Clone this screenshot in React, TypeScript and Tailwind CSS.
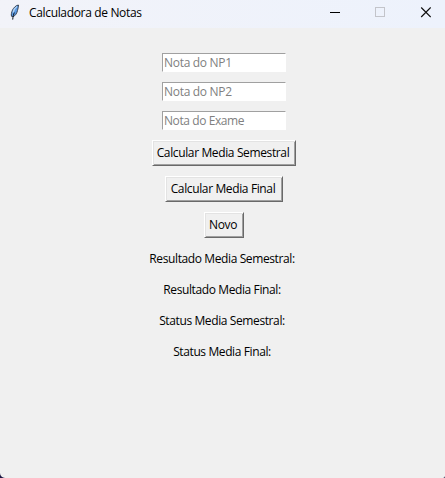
const fields = [
  { text: "Nota do NP1", tracking: "tracking-[-0.3px]" },
  { text: "Nota do NP2", tracking: "tracking-[-0.3px]" },
  { text: "Nota do Exame", tracking: "tracking-[-0.42px]" },
];

const buttons = [
  { label: "Calcular Media Semestral", size: "w-36" },
  { label: "Calcular Media Final", size: "w-[118px]" },
  { label: "Novo", size: "w-10" },
];

const results = [
  "Resultado Media Semestral:",
  "Resultado Media Final:",
  "Status Media Semestral:",
  "Status Media Final:",
];

function Feather() {
  return (
    <svg width="10" height="17" viewBox="0 0 10 17" fill="none">
      <path d="M8.4 1 C6 1.4 3.6 3.6 2.4 6.3 C1.5 8.5 1 10.6 1.5 12.3 L3 12.8 C5.4 11.6 6.9 9.3 7.5 6.5 C7.9 4.6 8.7 2.6 8.4 1Z" fill="#5b9be6" stroke="#2b3644" strokeWidth=".9" />
      <path d="M6.9 2.4 C5 3.6 3.6 6 3 8.6" stroke="#b8d4ef" strokeWidth="1.2" />
      <path d="M4.3 8.5 C3.6 10.3 3 12.5 2.7 15.6" stroke="#111822" strokeWidth="1" />
    </svg>
  );
}

function TitleBar() {
  return (
    <header className="flex h-7 items-center justify-between bg-gradient-to-r from-[#f2f3f9] to-[#edf2fc]">
      <div className="flex items-center gap-[9px] pl-2.5 pb-1">
        <Feather />
        <span className="pt-0.5 text-black tracking-[-0.34px]">Calculadora de Notas</span>
      </div>
      <div className="flex items-center gap-[35px] pr-3.5 pb-1">
        <svg width="10" height="11" viewBox="0 0 10 11"><path d="M0 5.5H10" stroke="#000" /></svg>
        <svg width="10" height="11" viewBox="0 0 10 11" fill="none"><rect x=".5" y=".5" width="9" height="9" stroke="#c3c4ca" /></svg>
        <svg width="11" height="11" viewBox="0 0 11 11"><path d="M1.2 .5L10.7 10M10.7 .5L1.2 10" stroke="#111" strokeWidth="1.2" /></svg>
      </div>
    </header>
  );
}

export default function App() {
  return (
    <div className="flex h-[478px] w-[445px] flex-col overflow-hidden bg-[#1b1742] font-['Open_Sans','Noto_Sans',sans-serif] text-[12px] leading-4">
      <div className="flex-1 overflow-hidden rounded-bl-[5px] rounded-br-[2px] bg-[#f0f0f0]">
        <TitleBar />
        <main className="flex flex-col items-center gap-2.5 pt-[25px] pl-[3px]">
          {fields.map(({ text, tracking }) => (
            <input
              key={text}
              placeholder={text}
              className={`${tracking} h-[19px] w-[124px] border border-t-[#a0a0a0] border-l-[#a0a0a0] border-r-white border-b-white bg-white px-px placeholder:text-[#808080] outline-none`}
            />
          ))}
          {buttons.map(({ label, size }) => (
            <button
              key={label}
              className={`${size} h-[26px] whitespace-nowrap border border-t-white border-l-white border-r-[#696969] border-b-[#696969] bg-[#f0f0f0] pr-0.5 tracking-[-0.37px] text-black shadow-[inset_1px_1px_#e3e3e3,inset_-1px_-1px_#a0a0a0]`}
            >
              {label}
            </button>
          ))}
          {results.map((text) => (
            <p key={text} className="flex h-[21px] items-center whitespace-nowrap pr-1 tracking-[-0.39px] text-black">{text}</p>
          ))}
        </main>
      </div>
    </div>
  );
}
